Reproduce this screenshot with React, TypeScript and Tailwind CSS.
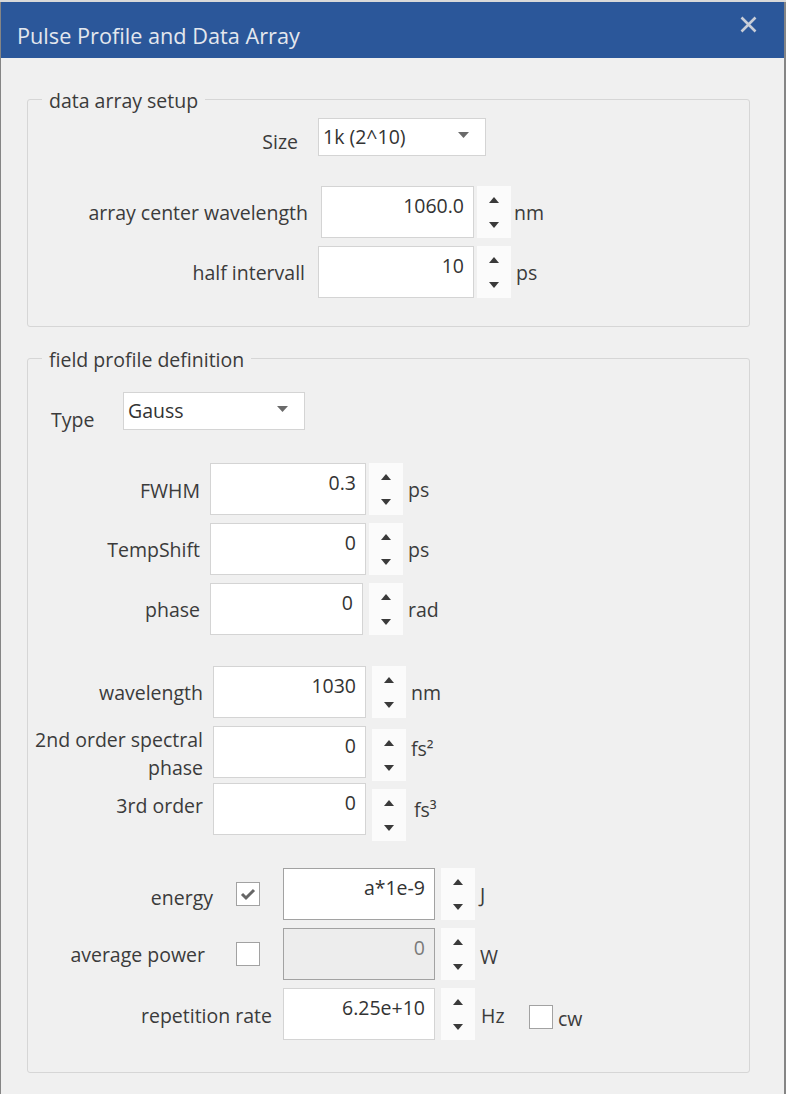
import React from "react";

const font = { fontFamily: '"Open Sans", "Noto Sans", sans-serif' };

function Spinner({ className = "" }: { className?: string }) {
  return (
    <div className={`flex h-[52px] w-[34px] flex-col items-center justify-between bg-[#fbfbfb] pt-[11px] pb-[10px] ${className}`}>
      <svg width="10" height="6" viewBox="0 0 10 6">
        <path d="M5 0 L10 6 L0 6 Z" fill="#3a3a3a" />
      </svg>
      <svg width="10" height="6" viewBox="0 0 10 6">
        <path d="M0 0 L10 0 L5 6 Z" fill="#3a3a3a" />
      </svg>
    </div>
  );
}

function NumBox({
  value,
  width,
  className = "",
  dark = false,
  disabled = false,
}: {
  value: string;
  width: string;
  className?: string;
  dark?: boolean;
  disabled?: boolean;
}) {
  return (
    <div
      className={`h-[52px] ${width} border ${dark ? "border-[#a2a2a2]" : "border-[#d4d4d4]"} ${
        disabled ? "bg-[#ededed] text-[#7a7a7a]" : "bg-white text-[#333]"
      } pr-[9px] pt-[6px] text-right leading-[25px] ${className}`}
    >
      {value}
    </div>
  );
}

function Select({ value, width }: { value: string; width: string }) {
  return (
    <div className={`flex h-[38px] ${width} items-center justify-between border border-[#d4d4d4] bg-white pl-[4px] pr-[16px]`}>
      <span className="pb-[1px] text-[#333]">{value}</span>
      <svg width="11" height="6" viewBox="0 0 11 6" className="mb-[4px]">
        <path d="M0 0 L11 0 L5.5 6 Z" fill="#6a6a6a" />
      </svg>
    </div>
  );
}

function CheckBox({ checked, className = "" }: { checked?: boolean; className?: string }) {
  return (
    <div className={`flex h-[24px] w-[24px] items-center justify-center border border-[#a2a2a2] bg-white ${className}`}>
      {checked && (
        <svg width="16" height="14" viewBox="0 0 16 14">
          <path d="M2 7 L6 11 L14 3" fill="none" stroke="#666" strokeWidth="3" />
        </svg>
      )}
    </div>
  );
}

function Group({ title, children, className = "" }: { title: string; children: React.ReactNode; className?: string }) {
  return (
    <fieldset className={`ml-[26px] w-[723px] rounded-[3px] border border-[#d6d6d6] ${className}`}>
      <legend className="ml-[14px] px-[7px] pt-[4px] leading-[22px] text-[#3b3b3b]">{title}</legend>
      {children}
    </fieldset>
  );
}

export default function App() {
  return (
    <div className="flex h-[1094px] w-[786px] flex-col overflow-hidden bg-[#f0f0f0] text-[19.5px] leading-[29px] text-[#3b3b3b]" style={font}>
      <div className="h-[2px] bg-[#d9d9d9]" />
      <div className="flex flex-1 flex-col border-l border-r-2 border-[#858585]">
        {/* title bar */}
        <div className="flex h-[56px] items-start justify-between bg-[#2b579a] pl-[16px] pr-[27px]">
          <span className="pt-[21px] text-[21.7px] leading-[26px] text-[#e4e7ee]">Pulse Profile and Data Array</span>
          <svg width="17" height="17" viewBox="0 0 17 17" className="mt-[14px]">
            <path d="M1.5 1.5 L15.5 15.5 M15.5 1.5 L1.5 15.5" stroke="#c9ced8" strokeWidth="2.6" />
          </svg>
        </div>

        {/* data array setup */}
        <Group title="data array setup" className="mt-[28px] pb-[28px]">
          <div className="mt-[6px] flex h-[38px] items-start">
            <div className="w-[270px] pt-[9px] text-right">Size</div>
            <div className="ml-[20px]">
              <Select value="1k (2^10)" width="w-[168px]" />
            </div>
          </div>
          <div className="mt-[30px] flex items-center">
            <div className="w-[280px] text-right">array center wavelength</div>
            <NumBox value="1060.0" width="w-[153px]" className="ml-[13px]" />
            <Spinner className="ml-[3px]" />
            <span className="ml-[3px]">nm</span>
          </div>
          <div className="mt-[8px] flex items-center">
            <div className="w-[277px] text-right">half intervall</div>
            <NumBox value="10" width="w-[156px]" className="ml-[13px]" />
            <Spinner className="ml-[3px]" />
            <span className="ml-[5px]">ps</span>
          </div>
        </Group>

        {/* field profile definition */}
        <Group title="field profile definition" className="mt-[18px] pb-[32px]">
          <div className="mt-[21px] flex h-[38px] items-start">
            <div className="ml-[23px] w-[72px] pt-[15px] leading-[26px]">Type</div>
            <Select value="Gauss" width="w-[182px]" />
          </div>

          <div className="mt-[33px] flex items-center">
            <div className="w-[172px] pt-[2px] text-right">FWHM</div>
            <NumBox value="0.3" width="w-[156px]" className="ml-[10px]" />
            <Spinner className="ml-[3px]" />
            <span className="ml-[5px]">ps</span>
          </div>
          <div className="mt-[8px] flex items-center">
            <div className="w-[172px] text-right">TempShift</div>
            <NumBox value="0" width="w-[156px]" className="ml-[10px]" />
            <Spinner className="ml-[3px]" />
            <span className="ml-[5px]">ps</span>
          </div>
          <div className="mt-[8px] flex items-center">
            <div className="w-[172px] text-right">phase</div>
            <NumBox value="0" width="w-[153px]" className="ml-[10px]" />
            <Spinner className="ml-[6px]" />
            <span className="ml-[5px]">rad</span>
          </div>

          <div className="mt-[31px] flex items-center">
            <div className="w-[175px] text-right">wavelength</div>
            <NumBox value="1030" width="w-[153px]" className="ml-[10px]" />
            <Spinner className="ml-[6px]" />
            <span className="ml-[5px]">nm</span>
          </div>
          <div className="mt-[8px] flex h-[56px] items-start">
            <div className="w-[175px] text-right leading-[28px]">
              2nd order spectral
              <br />
              phase
            </div>
            <NumBox value="0" width="w-[153px]" className="ml-[10px]" />
            <Spinner className="ml-[6px] mt-[3px]" />
            <span className="ml-[5px] mt-[8px]">fs²</span>
          </div>
          <div className="mt-[1px] flex h-[58px] items-start">
            <div className="w-[175px] pt-[8px] text-right">3rd order</div>
            <NumBox value="0" width="w-[153px]" className="ml-[10px]" />
            <Spinner className="ml-[6px] mt-[6px]" />
            <span className="ml-[8px] mt-[12px]">fs³</span>
          </div>

          <div className="mt-[27px] flex items-center">
            <div className="w-[185px] pt-[6px] text-right">energy</div>
            <CheckBox checked className="ml-[23px]" />
            <NumBox value="a*1e-9" width="w-[152px]" className="ml-[23px]" dark />
            <Spinner className="ml-[6px]" />
            <span className="ml-[5px]">J</span>
          </div>
          <div className="mt-[8px] flex items-center">
            <div className="w-[177px] text-right">average power</div>
            <CheckBox className="ml-[31px]" />
            <NumBox value="0" width="w-[152px]" className="ml-[23px]" dark disabled />
            <Spinner className="ml-[6px]" />
            <span className="ml-[5px] pt-[4px]">W</span>
          </div>
          <div className="mt-[8px] flex items-center">
            <div className="w-[244px] pt-[2px] text-right">repetition rate</div>
            <NumBox value="6.25e+10" width="w-[152px]" className="ml-[11px]" />
            <Spinner className="ml-[6px]" />
            <span className="ml-[6px] w-[48px] pt-[2px]">Hz</span>
            <CheckBox className="mt-[6px]" />
            <span className="ml-[5px] pt-[8px]">cw</span>
          </div>
        </Group>
      </div>
    </div>
  );
}
